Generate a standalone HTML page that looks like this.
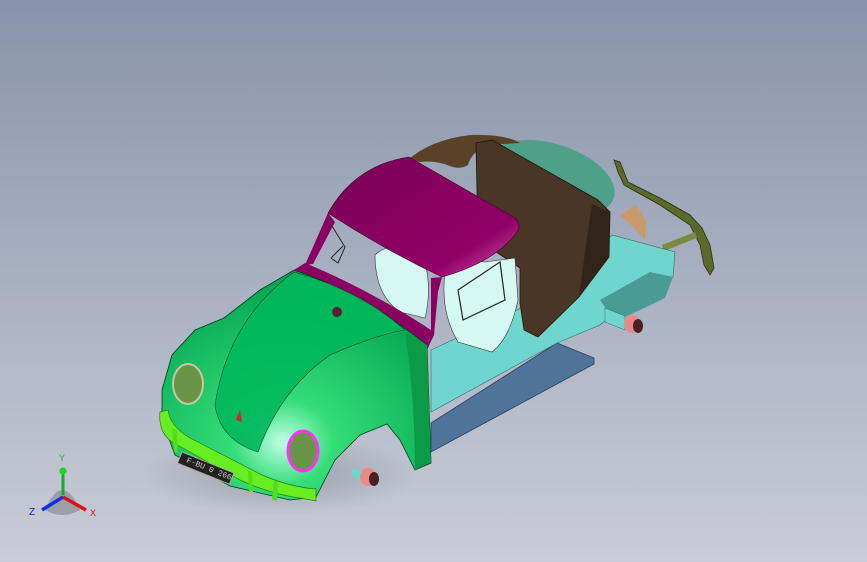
<!DOCTYPE html>
<html><head><meta charset="utf-8"><style>
html,body{margin:0;padding:0}
body{width:867px;height:562px;overflow:hidden;background:linear-gradient(180deg,#8894aa 0%,#a5aec0 45%,#c9ccd6 100%);}
svg{position:absolute;left:0;top:0}
</style></head><body>
<svg width="867" height="562" viewBox="0 0 867 562" xmlns="http://www.w3.org/2000/svg">
<defs>
<radialGradient id="g1" cx="0.45" cy="0.75" r="0.75"><stop offset="0" stop-color="#c0ffe8"/><stop offset="0.25" stop-color="#33dd77"/><stop offset="1" stop-color="#00a050"/></radialGradient>
<linearGradient id="rf" x1="0" y1="0" x2="1" y2="1"><stop offset="0" stop-color="#7a0055"/><stop offset="0.75" stop-color="#900066"/><stop offset="1" stop-color="#e060b0"/></linearGradient>
<radialGradient id="sh" cx="0.5" cy="0.5" r="0.5"><stop offset="0" stop-color="#555a66" stop-opacity="0.35"/><stop offset="1" stop-color="#555a66" stop-opacity="0"/></radialGradient>
</defs>
<ellipse cx="280" cy="475" rx="140" ry="40" fill="url(#sh)"/>
<!-- rear frame -->
<path d="M614 160 L618 172 L624 185 L660 205 L690 225 L700 245 L704 265 L710 275 L714 268 L710 245 L702 228 L690 215 L660 198 L628 182 L620 162 Z" fill="#5a6a2a" stroke="#2a3010" stroke-width="0.8"/>
<path d="M662 245 L695 232 L697 238 L664 251 Z" fill="#7c8a40"/>
<path d="M620 215 L636 205 L646 220 L645 240 Q632 225 620 215 Z" fill="#c89a68"/>
<!-- teal disk -->
<ellipse cx="552" cy="178" rx="65" ry="34" fill="#4fa088" transform="rotate(18 552 178)"/>
<!-- top brown arc -->
<path d="M408 160 Q430 140 470 135 Q505 134 520 143 L490 145 Q472 150 468 165 Q460 170 450 166 Q435 160 420 162 Z" fill="#5a4228"/>
<!-- blue floor -->
<path d="M431 423 L557 343 L594 358 L594 364 L431 452 Z" fill="#4f7399" stroke="#2c4260" stroke-width="0.8"/>
<!-- cyan chassis -->
<path d="M431 350 L560 290 L612 235 L675 252 L673 277 L640 292 L600 325 L557 343 L431 412 Z" fill="#6fd6cf" stroke="#2d6e6a" stroke-width="0.6"/>
<path d="M600 300 L650 272 L673 277 L665 298 L615 322 Z" fill="#4a9a96"/>
<!-- brown seat -->
<path d="M476 143 L492 140 L598 200 L610 212 L609 257 L579 297 L538 337 L524 330 L520 303 L520 268 L478 240 Z" fill="#4a3626" stroke="#1e140c" stroke-width="0.8"/>
<path d="M592 204 L610 212 L609 257 L579 297 L585 252 Z" fill="#33241a"/>
<!-- white seats -->
<path d="M375 255 Q385 245 400 248 L425 262 Q432 290 425 318 L400 312 Q375 295 375 255 Z" fill="#d6f8f2" stroke="#333" stroke-width="0.6"/>
<path d="M445 272 Q460 258 485 262 L515 258 L518 300 Q510 338 492 352 L458 342 Q440 312 445 272 Z" fill="#d6f8f2" stroke="#333" stroke-width="0.6"/>
<path d="M458 290 L500 262 L505 300 L463 320 Z" fill="none" stroke="#222" stroke-width="1.2"/>
<!-- roof -->
<path d="M328 213 Q355 165 409 157 L515 218 Q522 225 517 232 Q495 262 442 277 Q385 250 328 213 Z" fill="url(#rf)" stroke="#400030" stroke-width="0.6"/>
<!-- pillars / frame -->
<path d="M328 213 L335 222 L313 264 L305 265 Z" fill="#8a0062"/>
<path d="M294 270 L305 263 Q370 290 431 330 L427 350 Q360 300 294 270 Z" fill="#8a0062"/>
<path d="M431 278 L442 277 L438 292 L434 335 L427 350 L431 330 Z" fill="#8a0062"/>
<path d="M332 226 L345 247 L338 263 L331 258 L343 246" fill="none" stroke="#222" stroke-width="1"/>
<!-- green body -->
<path d="M162 420 L162 390 L172 355 L195 330 L224 318 L260 290 L294 270 Q360 292 427 345 L431 463 L415 470 L400 440 L387 424 L360 435 L335 460 L316 497 L290 500 L230 486 L175 455 Z" fill="url(#g1)" stroke="#003a1a" stroke-width="0.8"/>
<path d="M215 405 Q228 320 294 272 Q360 290 405 330 Q375 335 330 355 Q280 390 258 452 Q220 440 215 405 Z" fill="#00b85c" stroke="#003a1a" stroke-width="0.6" opacity="0.9"/>
<path d="M405 330 L427 345 L431 462 L415 470 Q415 400 405 330 Z" fill="#0a9a48"/>
<circle cx="337" cy="312" r="5" fill="#5a2030"/>
<path d="M236 420 L240 410 L242 422 Z" fill="#e02020"/>
<!-- headlights -->
<ellipse cx="188" cy="384" rx="15" ry="20" fill="#6a9447" stroke="#c8c8a0" stroke-width="2"/>
<ellipse cx="303" cy="451" rx="15" ry="20" fill="#6a9447" stroke="#ff30ff" stroke-width="3"/>
<!-- bumper -->
<path d="M160 412 Q158 432 172 442 L240 480 Q270 494 300 498 L316 501 L316 489 Q290 487 262 475 L190 438 Q170 426 168 410 Z" fill="#66ee22" stroke="#2a7a10" stroke-width="0.7"/>
<path d="M172 428 L174 452 L178 452 L177 430 Z M274 480 L272 500 L277 501 L278 482 Z M248 470 L249 492 L253 492 L252 472 Z" fill="#55dd18"/>
<rect x="182" y="452" width="56" height="12" fill="#222" stroke="#aa9" stroke-width="1" transform="rotate(22 182 452)"/>
<text x="186" y="462" font-family="Liberation Mono, monospace" font-size="8" fill="#ccc" transform="rotate(22 186 462)">F-BU 0 266</text>
<!-- wheels -->
<path d="M605 308 L625 316 L625 330 L605 322 Z" fill="#6fd6cf" stroke="#2d6e6a" stroke-width="0.5"/>
<ellipse cx="632" cy="324" rx="8" ry="9" fill="#e88a8a"/><ellipse cx="638" cy="326" rx="5" ry="7" fill="#4a2020"/>
<path d="M352 468 L364 472 L362 480 L352 476 Z" fill="#6fd6cf"/>
<ellipse cx="368" cy="477" rx="8" ry="9" fill="#e88a8a"/><ellipse cx="374" cy="479" rx="5" ry="7" fill="#4a2020"/>
<!-- triad -->
<path d="M45 510 Q62 470 80 510 Q62 520 45 510 Z" fill="#555" opacity="0.35"/>
<line x1="63" y1="495" x2="63" y2="472" stroke="#10b020" stroke-width="3"/>
<circle cx="63" cy="471" r="3.5" fill="#20d030"/>
<line x1="63" y1="497" x2="42" y2="510" stroke="#1030e0" stroke-width="3.5"/>
<line x1="63" y1="497" x2="86" y2="510" stroke="#e01010" stroke-width="3.5"/>
<text x="59" y="461" font-family="Liberation Sans, sans-serif" font-size="9" fill="#10c020">Y</text>
<text x="29" y="515" font-family="Liberation Sans, sans-serif" font-size="10" fill="#1020e0">Z</text>
<text x="90" y="516" font-family="Liberation Sans, sans-serif" font-size="9" fill="#e01010">X</text>
</svg>
</body></html>
